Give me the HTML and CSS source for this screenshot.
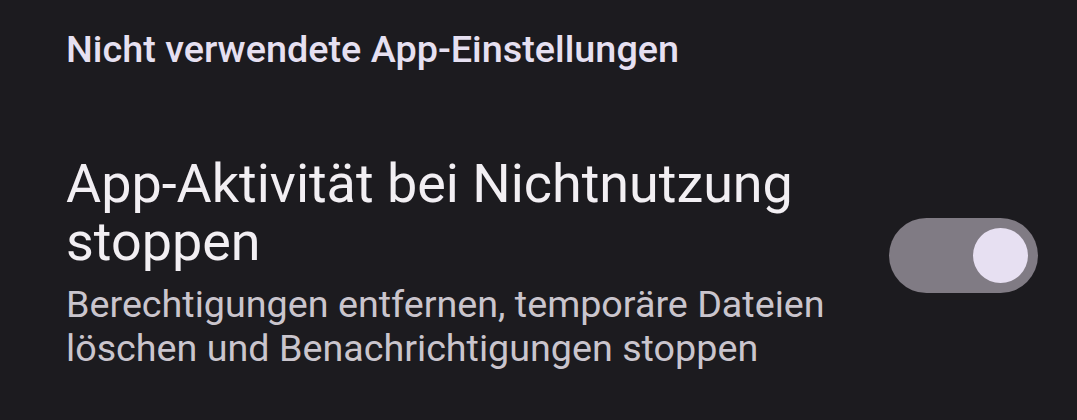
FILE: index.html
```html
<!DOCTYPE html>
<html lang="de">
<head>
<meta charset="utf-8">
<link rel="stylesheet" href="styles.css">
</head>
<body>
<div class="screen">
  <div class="category">Nicht verwendete App-Einstellungen</div>
  <div class="pref-row">
    <div class="pref-text">
      <div class="pref-title">App-Aktivität bei Nichtnutzung stoppen</div>
      <div class="pref-summary">Berechtigungen entfernen, temporäre Dateien löschen und Benachrichtigungen stoppen</div>
    </div>
    <div class="switch">
      <div class="switch-thumb"></div>
    </div>
  </div>
</div>
</body>
</html>
```

FILE: styles.css
```css
html, body {
  margin: 0;
  padding: 0;
  background: #1c1b1f;
}
.screen {
  width: 1077px;
  height: 420px;
  overflow: hidden;
  font-family: Roboto, "Noto Sans", sans-serif;
  padding: 27px 39px 0 66px;
  box-sizing: border-box;
}
.category {
  font-size: 37.8px;
  line-height: 44px;
  font-weight: 500;
  color: #e6e0f1;
}
.pref-row {
  margin-top: 84px;
  display: flex;
  align-items: center;
  justify-content: space-between;
}
.pref-text {
  width: 790px;
}
.pref-title {
  font-size: 53.9px;
  line-height: 58px;
  color: #f2eff3;
}
.pref-summary {
  margin-top: 11px;
  font-size: 37.7px;
  line-height: 44px;
  color: #cac5cd;
}
.switch {
  width: 149px;
  height: 75px;
  margin-bottom: 14px;
  border-radius: 38px;
  background: #807b84;
  display: flex;
  align-items: center;
  justify-content: flex-end;
  padding-right: 10px;
  box-sizing: border-box;
}
.switch-thumb {
  width: 55px;
  height: 55px;
  border-radius: 50%;
  background: #e7e0f2;
}
```
